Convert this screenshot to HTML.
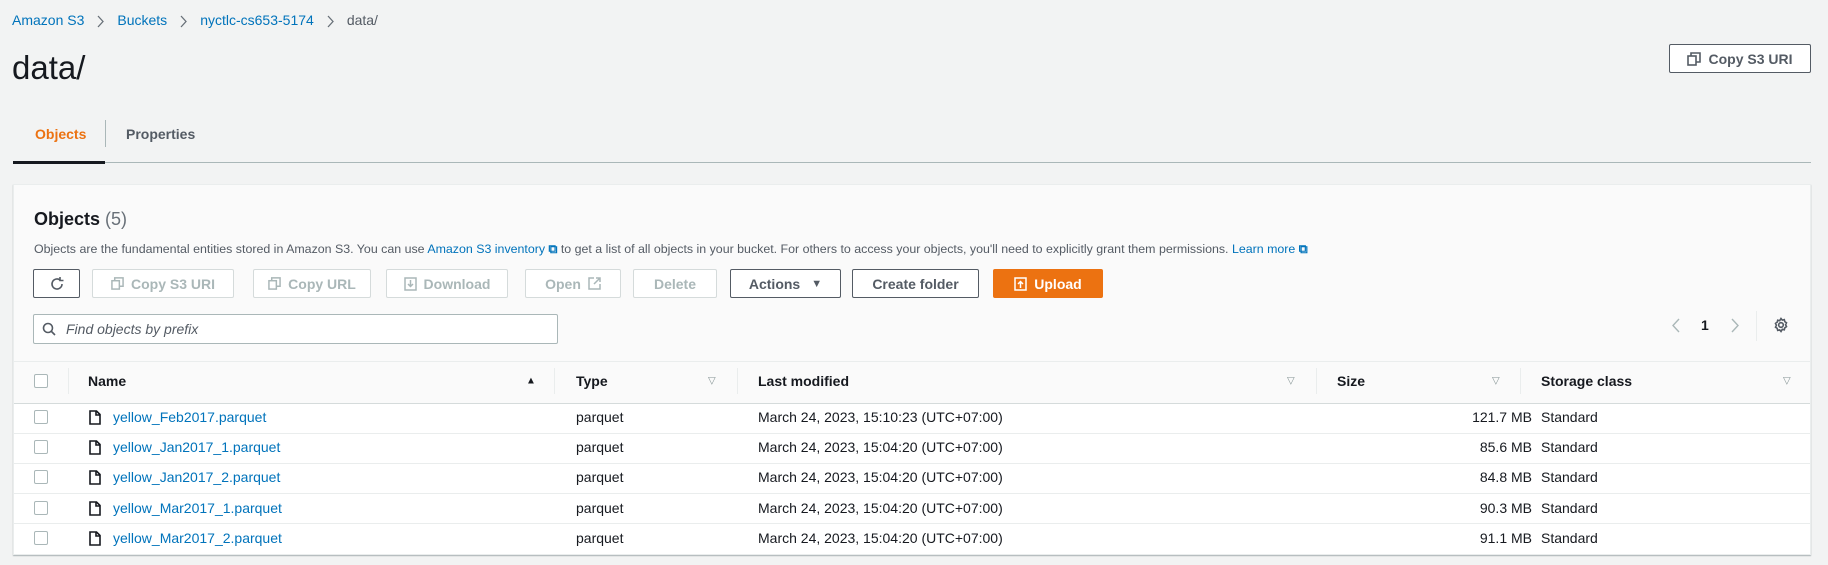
<!DOCTYPE html>
<html><head><meta charset="utf-8"><style>
*{box-sizing:border-box;margin:0;padding:0}
body{width:1828px;height:565px;background:#f2f3f3;font-family:"Liberation Sans",sans-serif;color:#16191f;position:relative;overflow:hidden;font-size:14px}
.a{position:absolute;white-space:nowrap}
.lnk{color:#0073bb}
.btn{position:absolute;height:29px;border:1px solid #545b64;background:#fff;border-radius:2px;font-weight:bold;font-size:14px;color:#545b64;display:flex;align-items:center;justify-content:center;gap:7px}
.dis{border-color:#d5dbdb;color:#aab7b8;background:#fff}
.hd{position:absolute;top:381px;transform:translateY(-50%);font-weight:bold;color:#16191f}
.tri{position:absolute;top:381px;transform:translateY(-50%);color:#879596;font-size:10px}
.sep{position:absolute;top:368px;width:1px;height:26px;background:#eaeded}
.row{position:absolute;left:14px;width:1796px;height:1px;background:#eaeded}
.cb{position:absolute;left:34px;width:14px;height:14px;border:1px solid #aab7b8;border-radius:2px;background:#fff}
svg{display:block}
.chev{display:inline-block;vertical-align:middle;margin:0 13px}
</style></head><body>
<div class="a" style="left:12px;top:12px;font-size:14px"><span class="lnk">Amazon S3</span><svg class="chev" width="7" height="13" viewBox="0 0 7 13" fill="none" stroke="#687078" stroke-width="1.3"><path d="M1 1l5 5.5L1 12"/></svg><span class="lnk">Buckets</span><svg class="chev" width="7" height="13" viewBox="0 0 7 13" fill="none" stroke="#687078" stroke-width="1.3"><path d="M1 1l5 5.5L1 12"/></svg><span class="lnk">nyctlc-cs653-5174</span><svg class="chev" width="7" height="13" viewBox="0 0 7 13" fill="none" stroke="#687078" stroke-width="1.3"><path d="M1 1l5 5.5L1 12"/></svg><span style="color:#545b64">data/</span></div>
<div class="a" style="left:12px;top:49px;font-size:33px">data/</div>
<div class="btn" style="left:1669px;top:44px;width:142px;color:#545b64"><svg width="14" height="14" viewBox="0 0 14 14" fill="none" stroke="#545b64" stroke-width="1.6"><rect x="1" y="4" width="8" height="9"/><path d="M4 4V1h9v9h-4"/></svg>Copy S3 URI</div>
<div class="a" style="left:35px;top:126px;font-weight:bold;color:#ec7211">Objects</div>
<div class="a" style="left:105px;top:120px;width:1px;height:27px;background:#aab7b8"></div>
<div class="a" style="left:126px;top:126px;font-weight:bold;color:#545b64">Properties</div>
<div class="a" style="left:13px;top:162px;width:1798px;height:1px;background:#aab7b8"></div>
<div class="a" style="left:13px;top:161px;width:92px;height:3px;background:#16191f"></div>

<div class="a" style="left:13px;top:184px;width:1798px;height:371px;background:#fafafa;border:1px solid #eaeded;box-shadow:0 1px 1px rgba(0,28,36,.3)"></div>
<div class="a" style="left:34px;top:209px;font-size:18px;font-weight:bold">Objects <span style="font-weight:normal;color:#687078">(5)</span></div>
<div class="a" style="left:34px;top:242px;font-size:12.4px;color:#545b64">Objects are the fundamental entities stored in Amazon S3. You can use <span class="lnk">Amazon S3 inventory</span> <span class="lnk" style="font-weight:bold">&#x29C9;</span> to get a list of all objects in your bucket. For others to access your objects, you'll need to explicitly grant them permissions. <span class="lnk">Learn more</span> <span class="lnk" style="font-weight:bold">&#x29C9;</span></div>

<div class="btn" style="left:33px;top:269px;width:47px"><svg width="16" height="16" viewBox="0 0 16 16" fill="none" stroke="#545b64" stroke-width="1.6"><path d="M13 8a5 5 0 1 1-2-4"/><path d="M11 1v3.5h3.5" /></svg></div>
<div class="btn dis" style="left:92px;top:269px;width:142px"><svg width="13" height="13" viewBox="0 0 14 14" fill="none" stroke="#aab7b8" stroke-width="1.6"><rect x="1" y="4" width="8" height="9"/><path d="M4 4V1h9v9h-4"/></svg>Copy S3 URI</div>
<div class="btn dis" style="left:253px;top:269px;width:118px"><svg width="13" height="13" viewBox="0 0 14 14" fill="none" stroke="#aab7b8" stroke-width="1.6"><rect x="1" y="4" width="8" height="9"/><path d="M4 4V1h9v9h-4"/></svg>Copy URL</div>
<div class="btn dis" style="left:386px;top:269px;width:122px"><svg width="13" height="14" viewBox="0 0 13 14" fill="none" stroke="#aab7b8" stroke-width="1.5"><rect x="1" y="1" width="11" height="12"/><path d="M6.5 3v6M4 7l2.5 2.5L9 7"/></svg>Download</div>
<div class="btn dis" style="left:525px;top:269px;width:96px">Open <svg width="13" height="13" viewBox="0 0 13 13" fill="none" stroke="#aab7b8" stroke-width="1.5"><path d="M6 1H1v11h11V7M8 1h4v4M12 1L6 7"/></svg></div>
<div class="btn dis" style="left:633px;top:269px;width:84px">Delete</div>
<div class="btn" style="left:730px;top:269px;width:111px;color:#545b64">Actions <span style="font-size:11px;margin-left:4px">&#9660;</span></div>
<div class="btn" style="left:852px;top:269px;width:127px;color:#545b64">Create folder</div>
<div class="btn" style="left:993px;top:269px;width:110px;background:#ec7211;border-color:#ec7211;color:#fff"><svg width="13" height="14" viewBox="0 0 13 14" fill="none" stroke="#fff" stroke-width="1.5"><rect x="1" y="1" width="11" height="12"/><path d="M6.5 11V5M4 7l2.5-2.5L9 7"/></svg>Upload</div>

<div class="a" style="left:33px;top:314px;width:525px;height:30px;border:1px solid #aab7b8;background:#fff;border-radius:2px"></div>
<svg class="a" style="left:42px;top:322px" width="14" height="14" viewBox="0 0 14 14" fill="none" stroke="#545b64" stroke-width="1.6"><circle cx="6" cy="6" r="4.5"/><path d="M9.5 9.5L13 13"/></svg>
<div class="a" style="left:66px;top:321px;font-style:italic;color:#545b64">Find objects by prefix</div>
<svg class="a" style="left:1672px;top:318px" width="8" height="15" viewBox="0 0 8 15" fill="none" stroke="#aab7b8" stroke-width="1.4"><path d="M7 1L1 7.5 7 14"/></svg>
<div class="a" style="left:1701px;top:317px;font-weight:bold">1</div>
<svg class="a" style="left:1731px;top:318px" width="8" height="15" viewBox="0 0 8 15" fill="none" stroke="#aab7b8" stroke-width="1.4"><path d="M1 1l6 6.5L1 14"/></svg>
<div class="a" style="left:1756px;top:311px;width:1px;height:30px;background:#eaeded"></div>
<svg class="a" style="left:1773px;top:317px" width="16" height="16" viewBox="0 0 16 16" fill="none" stroke="#545b64" stroke-width="1.6"><circle cx="8" cy="8" r="2.3"/><path d="M8 1.5l1.3 1.6 2-.5.5 2 1.7 1.2-.9 1.9.9 1.9-1.7 1.2-.5 2-2-.5L8 14.5l-1.3-1.6-2 .5-.5-2L2.5 10.2l.9-1.9-.9-1.9 1.7-1.2.5-2 2 .5z"/></svg>

<div class="row" style="top:361px"></div>
<div class="a" style="left:14px;top:404px;width:1796px;height:150px;background:#fff"></div>
<div class="row" style="top:403px;background:#d5dbdb"></div>
<div class="cb" style="top:374px"></div>
<div class="sep" style="left:68px"></div>
<div class="hd" style="left:88px">Name</div><div class="tri" style="left:526px;color:#16191f">&#9650;</div>
<div class="sep" style="left:554px"></div>
<div class="hd" style="left:576px">Type</div><div class="tri" style="left:708px">&#9661;</div>
<div class="sep" style="left:737px"></div>
<div class="hd" style="left:758px">Last modified</div><div class="tri" style="left:1287px">&#9661;</div>
<div class="sep" style="left:1316px"></div>
<div class="hd" style="left:1337px">Size</div><div class="tri" style="left:1492px">&#9661;</div>
<div class="sep" style="left:1520px"></div>
<div class="hd" style="left:1541px">Storage class</div><div class="tri" style="left:1783px">&#9661;</div>

<div class="row" style="top:433px"></div><div class="row" style="top:463px"></div><div class="row" style="top:493px"></div><div class="row" style="top:523px"></div>

<div id="rows"></div>
<script>
var d=[["yellow_Feb2017.parquet","15:10:23","121.7 MB"],["yellow_Jan2017_1.parquet","15:04:20","85.6 MB"],["yellow_Jan2017_2.parquet","15:04:20","84.8 MB"],["yellow_Mar2017_1.parquet","15:04:20","90.3 MB"],["yellow_Mar2017_2.parquet","15:04:20","91.1 MB"]];
var h="";d.forEach(function(r,i){var c=418+i*30.2;
h+='<div class="cb" style="top:'+(c-8)+'px"></div>';
h+='<svg class="a" style="left:89px;top:'+(c-8)+'px" width="12" height="15" viewBox="0 0 12 15" fill="none" stroke="#16191f" stroke-width="1.6"><path d="M1 1h6.5L11 4.5V14H1z"/><path d="M7 1v4h4"/></svg>';
h+='<div class="a lnk" style="left:113px;top:'+(c-9)+'px">'+r[0]+'</div>';
h+='<div class="a" style="left:576px;top:'+(c-9)+'px">parquet</div>';
h+='<div class="a" style="left:758px;top:'+(c-9)+'px">March 24, 2023, '+r[1]+' (UTC+07:00)</div>';
h+='<div class="a" style="right:296px;top:'+(c-9)+'px">'+r[2]+'</div>';
h+='<div class="a" style="left:1541px;top:'+(c-9)+'px">Standard</div>';});
document.getElementById("rows").innerHTML=h;
</script>
</body></html>
